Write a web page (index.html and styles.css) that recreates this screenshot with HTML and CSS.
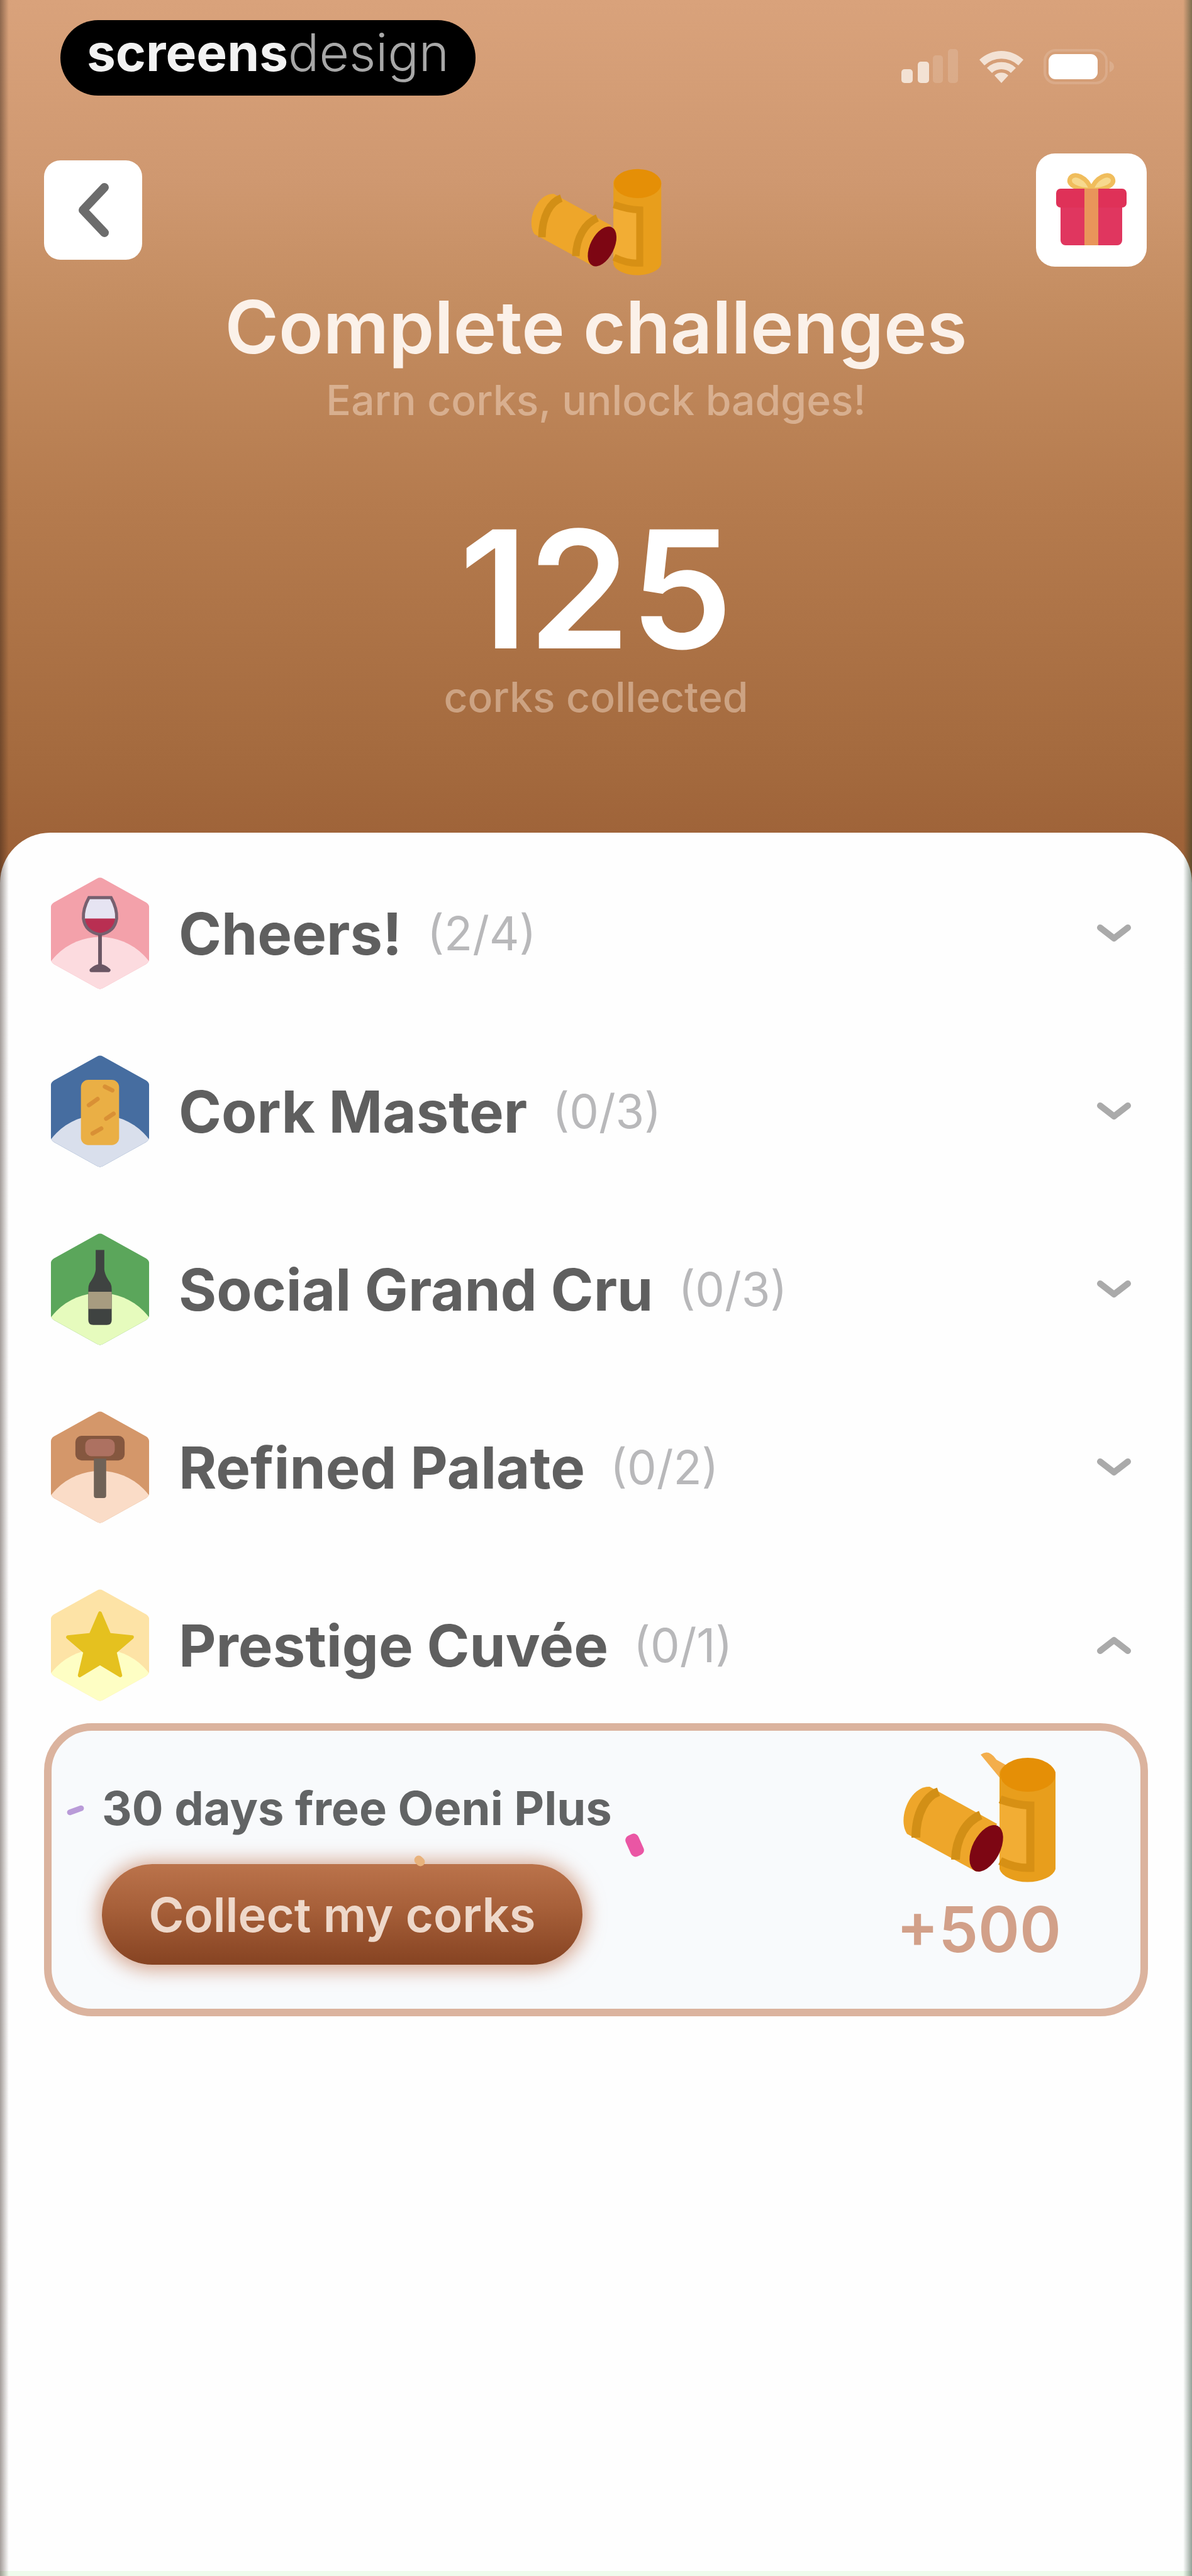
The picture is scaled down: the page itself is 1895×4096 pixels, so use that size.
FILE: index.html
```html
<!DOCTYPE html>
<html lang="en">
<head>
<meta charset="utf-8">
<meta name="viewport" content="width=device-width, initial-scale=1">
<title>Complete challenges</title>
<link rel="stylesheet" href="styles.css">
</head>
<body>
<svg class="defs" aria-hidden="true">
  <defs>
    <clipPath id="hex"><path d="M75 3Q80 0 85 3L155 42Q160 45 160 51V133Q160 139 155 142L85 181Q80 184 75 181L5 142Q0 139 0 133V51Q0 45 5 42Z"/></clipPath>
    <g id="corks">
      <path d="M46 47L153 106L120 182L10 122C-6 98 14 46 46 47Z" fill="#eea62a"/>
      <path d="M60 55C40 62 24 88 24 128" fill="none" stroke="#d28f16" stroke-width="14"/>
      <path d="M127 92C104 102 88 128 87 163" fill="none" stroke="#d28f16" stroke-width="14"/>
      <path d="M157 24A45 24 0 0 1 246 24V178A45 24 0 0 1 157 178Z" fill="#e89e1c"/>
      <path d="M157 74Q180 80 200 80V176Q178 176 157 166Z" fill="#f2ad34"/>
      <path d="M158 67Q182 76 206 77V176Q182 177 158 165" fill="none" stroke="#d79014" stroke-width="13"/>
      <ellipse cx="202" cy="28" rx="44" ry="27" fill="#e58f06"/>
      <ellipse cx="136" cy="145" rx="22" ry="40" transform="rotate(27 136 145)" fill="#7d0613"/>
    </g>
  </defs>
</svg>
<main class="app">
  <header class="hero">
    <div class="status">
      <div class="brand"><strong>screens</strong><span>design</span></div>
      <div class="indicators">
        <svg width="92" height="56" viewBox="0 0 92 56" aria-label="Signal"><g fill="#f3e2d4"><rect x="0" y="32" width="18" height="22" rx="5"/><rect x="26" y="20" width="18" height="34" rx="5"/></g><g fill="#fff" opacity=".14"><rect x="50" y="10" width="16" height="44" rx="5"/><rect x="74" y="0" width="16" height="54" rx="5"/></g></svg>
        <svg width="74" height="56" viewBox="0 0 74 56" aria-label="Wi-Fi"><path d="M2 17A51 51 0 0 1 72 17L64 26A39 39 0 0 0 10 26Z" fill="#f3e2d4"/><path d="M14 30A33 33 0 0 1 60 30L52 38A22 22 0 0 0 22 38Z" fill="#f3e2d4"/><path d="M26 42A16 16 0 0 1 48 42L37 54Z" fill="#f3e2d4"/></svg>
        <svg width="114" height="56" viewBox="0 0 114 56" aria-label="Battery"><rect x="2" y="2" width="98" height="52" rx="17" fill="none" stroke="#fff" stroke-opacity=".14" stroke-width="4"/><path d="M105 19Q112 22 112 28T105 37Z" fill="#fff" opacity=".16"/><rect x="8" y="8" width="78" height="40" rx="11" fill="#fff"/></svg>
      </div>
    </div>
    <nav class="nav">
      <button class="tile back" aria-label="Back"><svg width="56" height="92" viewBox="0 0 56 92"><path d="M46 10L12 46L46 82" fill="none" stroke="#6c6c6c" stroke-width="14" stroke-linecap="round" stroke-linejoin="round"/></svg></button>
      <svg class="hero-corks" width="212" height="176" viewBox="0 0 248 206" aria-hidden="true"><use href="#corks"/></svg>
      <button class="tile gift" aria-label="Rewards"><svg width="112" height="116" viewBox="0 0 112 116"><path d="M56 26C50 6 28 -4 22 8C18 18 34 26 56 26C78 26 94 18 90 8C84 -4 62 6 56 26Z" fill="#f7d98e" stroke="#f0bd5c" stroke-width="7"/><rect x="7" y="38" width="98" height="76" rx="8" fill="#e0365f"/><rect x="0" y="24" width="112" height="30" rx="7" fill="#df3158"/><path d="M45 24H67V114H45Z" fill="#e9955a"/></svg></button>
    </nav>
    <h1>Complete challenges</h1>
    <p class="sub">Earn corks, unlock badges!</p>
    <p class="total">125</p>
    <p class="sub">corks collected</p>
  </header>
  <section class="sheet">
    <div class="list">
      <button class="row" aria-expanded="false">
        <svg class="badge" viewBox="0 0 160 184" aria-hidden="true"><g clip-path="url(#hex)"><path d="M0 0H160V184H0Z" fill="#f3a1aa"/><circle cx="80" cy="198" r="100" fill="#fcdbdf"/></g><path d="M62 34H98Q108 52 107 68Q104 90 80 94Q56 90 53 68Q52 52 62 34Z" fill="#e6e4f2"/><path d="M54 68H106Q104 90 80 94Q56 90 54 68Z" fill="#b92f52"/><path d="M62 34H98Q108 52 107 68Q104 90 80 94Q56 90 53 68Q52 52 62 34Z" fill="none" stroke="#77606f" stroke-width="5"/><path d="M80 94V148M66 152Q80 138 94 152Z" fill="#6b5664" stroke="#6b5664" stroke-width="6" stroke-linejoin="round"/></svg>
        <span class="name">Cheers!</span><span class="count">(2/4)</span>
        <svg class="chev" viewBox="0 0 56 30" aria-hidden="true"><path d="M6 6L28 23L50 6"/></svg>
      </button>
      <button class="row" aria-expanded="false">
        <svg class="badge" viewBox="0 0 160 184" aria-hidden="true"><g clip-path="url(#hex)"><path d="M0 0H160V184H0Z" fill="#466da0"/><circle cx="80" cy="198" r="100" fill="#d9dfec"/></g><rect x="49" y="41" width="62" height="106" rx="12" fill="#eaaf45"/><path d="M62 82L76 72M68 128L82 120M90 104L102 96M88 52L100 58" stroke="#d99035" stroke-width="7" stroke-linecap="round"/></svg>
        <span class="name">Cork Master</span><span class="count">(0/3)</span>
        <svg class="chev" viewBox="0 0 56 30" aria-hidden="true"><path d="M6 6L28 23L50 6"/></svg>
      </button>
      <button class="row" aria-expanded="false">
        <svg class="badge" viewBox="0 0 160 184" aria-hidden="true"><g clip-path="url(#hex)"><path d="M0 0H160V184H0Z" fill="#5ba65b"/><circle cx="80" cy="198" r="100" fill="#e6fbbd"/></g><path d="M73 28H87V60Q88 70 97 82Q99 86 99 92V142Q99 150 91 150H69Q61 150 61 142V92Q61 86 63 82Q72 70 73 60Z" fill="#3f4341"/><path d="M61 96H99V124H61Z" fill="#a79c80"/></svg>
        <span class="name">Social Grand Cru</span><span class="count">(0/3)</span>
        <svg class="chev" viewBox="0 0 56 30" aria-hidden="true"><path d="M6 6L28 23L50 6"/></svg>
      </button>
      <button class="row" aria-expanded="false">
        <svg class="badge" viewBox="0 0 160 184" aria-hidden="true"><g clip-path="url(#hex)"><path d="M0 0H160V184H0Z" fill="#d4976a"/><circle cx="80" cy="198" r="100" fill="#fadcc7"/></g><rect x="40" y="41" width="80" height="40" rx="10" fill="#85573f"/><rect x="56" y="46" width="48" height="28" rx="10" fill="#ad7161"/><path d="M70 78H90V138Q90 142 86 142H74Q70 142 70 138Z" fill="#6f6257"/></svg>
        <span class="name">Refined Palate</span><span class="count">(0/2)</span>
        <svg class="chev" viewBox="0 0 56 30" aria-hidden="true"><path d="M6 6L28 23L50 6"/></svg>
      </button>
      <button class="row" aria-expanded="true" aria-controls="prestige">
        <svg class="badge" viewBox="0 0 160 184" aria-hidden="true"><g clip-path="url(#hex)"><path d="M0 0H160V184H0Z" fill="#fde3a6"/><circle cx="80" cy="198" r="100" fill="#fefec4"/></g><path d="M80 40L95 75L132 79L104 103L113 141L80 121L47 141L56 103L28 79L65 75Z" fill="#e5c11f" stroke="#e5c11f" stroke-width="6" stroke-linejoin="round"/></svg>
        <span class="name">Prestige Cuvée</span><span class="count">(0/1)</span>
        <svg class="chev" viewBox="0 0 56 30" aria-hidden="true"><path d="M6 24L28 7L50 24"/></svg>
      </button>
    </div>
    <article class="card" id="prestige">
      <div class="offer">
        <h2>30 days free Oeni Plus</h2>
        <button class="collect">Collect my corks</button>
      </div>
      <div class="reward">
        <svg width="248" height="206" viewBox="0 0 248 206" aria-hidden="true"><path d="M127 -4Q140 -14 152 4L170 14L160 36Z" fill="#f3ae4c"/><use href="#corks"/></svg>
        <span>+500</span>
      </div>
      <i class="confetti purple"></i><i class="confetti pink"></i><i class="confetti amber"></i>
    </article>
  </section>
</main>
</body>
</html>
```
FILE: styles.css
```css
* { box-sizing: border-box; }
body {
  margin: 0;
  background: #fefefe;
  font-family: Inter, "Open Sans", sans-serif;
}
h1, h2, p { margin: 0; }
button {
  font: inherit;
  border: 0;
  margin: 0;
  padding: 0;
  cursor: pointer;
}
svg { display: block; overflow: visible; flex: none; }
.defs { position: absolute; width: 0; height: 0; }

.app {
  position: relative;
  display: flex;
  flex-direction: column;
  min-height: 100vh;
}
/* soft shading along the left and right screen edges */
.app::after {
  content: "";
  position: absolute;
  inset: 0;
  pointer-events: none;
  background:
    linear-gradient(to right, rgba(40, 24, 16, .42), rgba(40, 24, 16, 0)) left / 14px 100% no-repeat,
    linear-gradient(to left, rgba(20, 50, 30, .46), rgba(20, 50, 30, 0)) right / 14px 100% no-repeat;
}

.hero {
  padding: 32px 0 276px;
  color: #fff;
  text-align: center;
  background: linear-gradient(#d9a27b 0%, #cf9870 20%, #c48d61 34%, #b57b4e 56%, #a46a3e 85%, #9e6238 95%);
}
.status {
  display: flex;
  justify-content: space-between;
  align-items: flex-start;
  padding: 0 122px 0 96px;
}
.brand {
  display: flex;
  justify-content: center;
  width: 660px;
  height: 120px;
  border-radius: 60px;
  background: #000;
  font-size: 82px;
  line-height: 104px;
}
.brand strong { font-weight: 700; color: #f2f2f2; }
.brand span { font-weight: 300; color: #a8a8a8; }
.indicators { display: flex; gap: 30px; padding-top: 46px; }

.nav {
  display: grid;
  grid-template-columns: 1fr auto 1fr;
  align-items: center;
  padding: 84px 72px 0 70px;
}
.tile {
  display: flex;
  align-items: center;
  justify-content: center;
  background: #fff;
}
.back { width: 156px; height: 158px; border-radius: 26px; }
.gift { width: 176px; height: 180px; border-radius: 30px; justify-self: end; }
.hero-corks { margin: 32px 0 -12px; }

h1 {
  margin-top: 20px;
  font-size: 116px;
  line-height: 136px;
  font-weight: 600;
  color: #fbf1e9;
}
.sub {
  margin-top: 8px;
  font-size: 66px;
  line-height: 80px;
  font-weight: 500;
  color: rgba(255, 236, 222, .42);
}
.total {
  margin-top: 138px;
  font-size: 260px;
  line-height: 246px;
  font-weight: 600;
}

.sheet {
  flex: 1;
  margin-top: -100px;
  padding: 70px 70px 66px;
  border-radius: 80px 80px 0 0;
  border-bottom: 8px solid #eefbec;
  background: #fefefe;
}
.list { display: grid; gap: 103px; padding: 0 26px 0 10px; }
.row {
  display: flex;
  align-items: center;
  height: 180px;
  background: none;
  text-align: left;
}
.badge { width: 158px; height: 180px; }
.name {
  margin-left: 46px;
  font-size: 92px;
  font-weight: 700;
  color: #5f5f5f;
}
.count {
  margin-left: 40px;
  font-size: 74px;
  font-weight: 400;
  color: #b8b8ba;
}
.chev {
  width: 56px;
  height: 30px;
  margin-left: auto;
  fill: none;
  stroke: #aaaaaa;
  stroke-width: 10px;
  stroke-linecap: round;
  stroke-linejoin: round;
}

.card {
  position: relative;
  display: flex;
  justify-content: space-between;
  margin-top: 34px;
  padding: 42px 126px 66px 80px;
  border: 12px solid #dbb39e;
  border-radius: 76px;
  background: #f8fafc;
}
.offer { display: flex; flex-direction: column; align-items: flex-start; }
h2 {
  margin: 36px 0 44px;
  font-size: 74px;
  line-height: 90px;
  font-weight: 700;
  color: #626465;
}
.collect {
  width: 764px;
  height: 160px;
  border-radius: 80px;
  font-size: 76px;
  font-weight: 600;
  color: #eed8ca;
  background: linear-gradient(#bb734b, #a65f39 45%, #864322);
  box-shadow: 0 2px 30px 6px rgba(190, 110, 72, .6);
}
.reward {
  display: flex;
  flex-direction: column;
  align-items: center;
  font-size: 100px;
  line-height: 120px;
  font-weight: 600;
  color: #d2a089;
}
.reward span { margin-top: 8px; }

.confetti { position: absolute; border-radius: 8px; }
.purple { left: 24px; top: 122px; width: 28px; height: 9px; background: #b99bd8; transform: rotate(-20deg); }
.pink { left: 916px; top: 164px; width: 22px; height: 36px; background: #ea56a4; transform: rotate(-24deg); }
.amber { left: 576px; top: 200px; width: 18px; height: 14px; background: #e8b27c; transform: rotate(45deg); }
```
